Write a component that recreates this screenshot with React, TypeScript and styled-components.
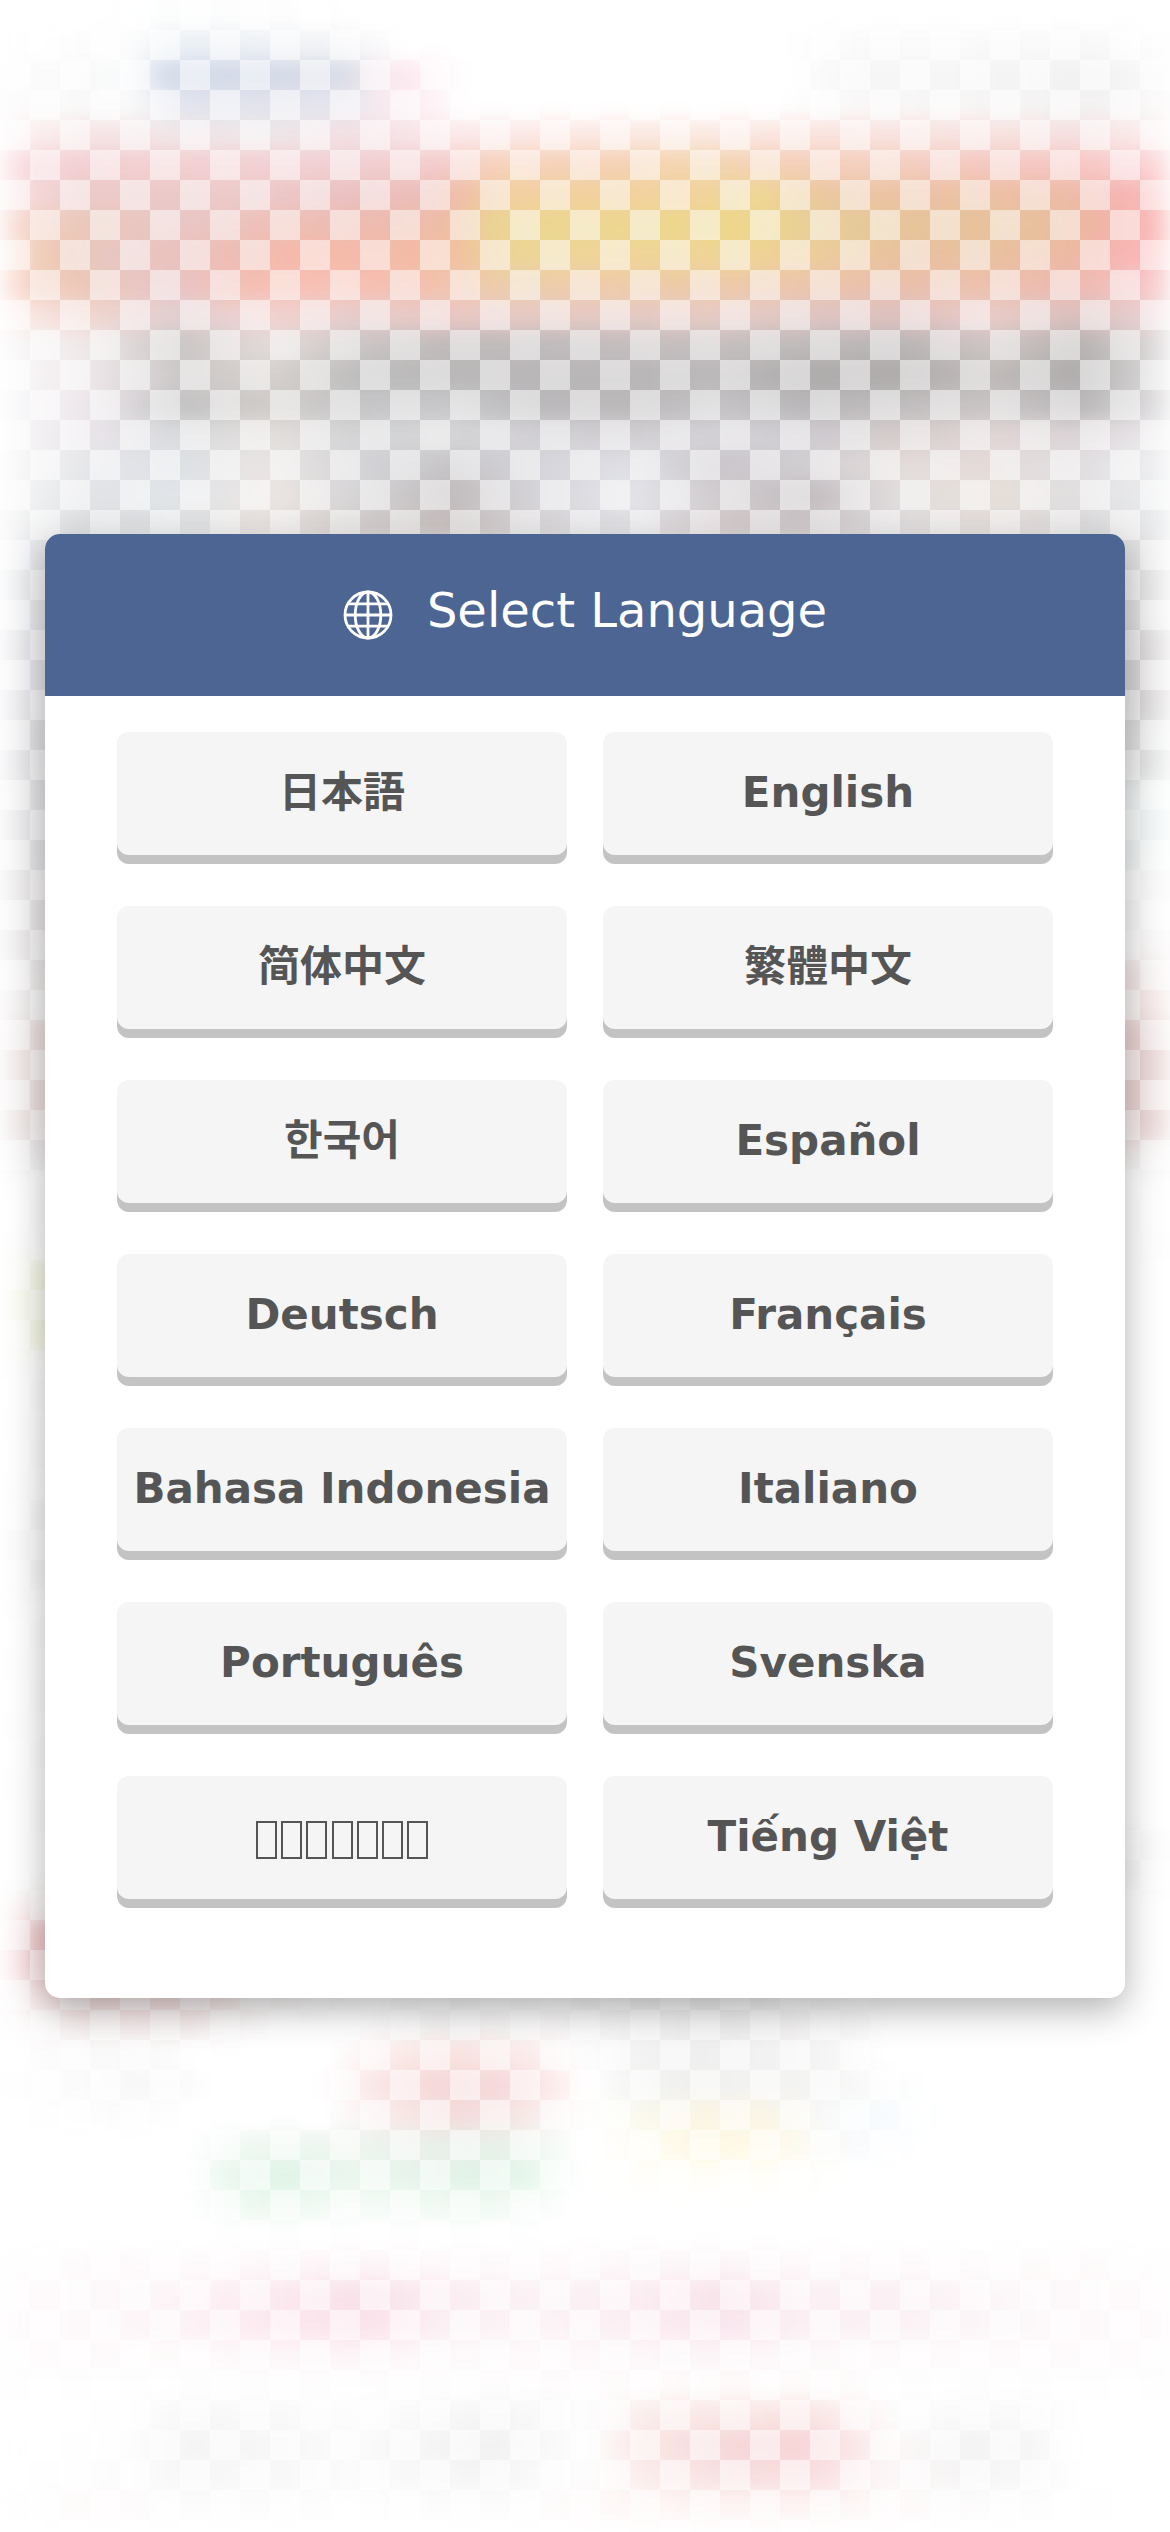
import React from "react";
import styled, { createGlobalStyle } from "styled-components";

const GlobalStyle = createGlobalStyle`
  *, *::before, *::after { box-sizing: border-box; }
  body { margin: 0; background: #fff; }
`;

const Page = styled.div`
  display: grid;
  width: 1170px;
  height: 2532px;
  overflow: hidden;
  background: #fff;
  font-family: "DejaVu Sans", "Noto Sans CJK JP", sans-serif;
`;

const Backdrop = styled.div`
  grid-area: 1 / 1;
  display: grid;
  overflow: hidden;
  height: 2532px;
`;

const Glow = styled.div`
  grid-area: 1 / 1;
  display: flex;
  flex-direction: column;
  filter: blur(10px);
`;

const Band = styled.div<{ $rows: number; $stops: string }>`
  flex: none;
  height: ${(p) => p.$rows * 30}px;
  background: linear-gradient(to right, ${(p) => p.$stops});
`;

const Checker = styled.div`
  grid-area: 1 / 1;
  z-index: 1;
  background:
    linear-gradient(
      to right,
      rgba(255, 255, 255, 0.55),
      rgba(255, 255, 255, 0) 36px calc(100% - 30px),
      rgba(255, 255, 255, 0.3)
    ),
    repeating-conic-gradient(
      transparent 0 25%,
      rgba(255, 255, 255, 0.5) 0 50%
    )
    0 0 / 60px 60px;
`;

const Dialog = styled.section`
  grid-area: 1 / 1;
  z-index: 2;
  place-self: center;
  width: 1080px;
  height: 1464px;
  overflow: hidden;
  border-radius: 15px;
  background: #fff;
  box-shadow: 0 12px 36px rgba(0, 0, 0, 0.3);
`;

const Header = styled.header`
  display: flex;
  align-items: center;
  justify-content: center;
  gap: 34px;
  height: 162px;
  background: #4d6592;
  color: #fff;
`;

const Title = styled.h1`
  margin: 0;
  padding-bottom: 11px;
  font-size: 48px;
  font-weight: 400;
  line-height: 56px;
`;

const GlobeIcon = styled.svg`
  width: 50px;
  height: 50px;
  fill: none;
  stroke: currentColor;
  stroke-width: 2.8;
`;

const LanguageGrid = styled.div`
  display: grid;
  grid-template-columns: repeat(2, 450px);
  grid-auto-rows: 123px;
  gap: 51px 36px;
  padding: 36px 72px;
`;

const LanguageButton = styled.button`
  border: 0;
  padding: 0 0 2px;
  border-radius: 12px;
  background: #f5f5f5;
  box-shadow: 0 9px 0 #c3c3c3;
  color: #555;
  font: bold 42px/49px "DejaVu Sans", "Noto Sans CJK JP", "Noto Sans CJK SC",
    "Noto Sans CJK KR", sans-serif;
  white-space: nowrap;
`;

const GlyphBoxes = styled.span`
  display: flex;
  justify-content: center;
  gap: 4.2px;
  padding-top: 6px;
`;

const GlyphBox = styled.span`
  width: 21px;
  height: 38px;
  border: 2px solid currentColor;
`;

const W = "#fff";

/*
 * Each band: height in 30px rows, then colours from left to right, spaced
 * evenly unless a colour names its own position ("e4ebf2@180").
 */
const bands: [number, string][] = [
  [1, "fff fff fcfdfd fdfdfd fff fff fff fff fff fff fff fff fff fff"],
  [1, "fff fcfcfc@90 fdfdfd@130 eaf0f5@180 eef1f5 f3f4f7@340 fff@410 fff@780 fafafa fafafa f9f9f9 f8f8f8 fff"],
  [1, "fdfdfd f9f9f9@90 fafbfc@130 d3dbea@165 d3d9e7@270 d8dce7@345 f8e8ee@380 fde8ef@410 fff@465 fff@780 f6f6f6 f6f6f6 f4f4f4 f1f1f1 fbfbfb"],
  [1, "fdfbfb f9f9f9@90 fbfbfb@130 e2e5ee@180 e2e3ed@270 e6e6ee@340 f6ebf1@380 fdf0f5@420 fff@470 fff@700 fff@780 faf8f8 f8f6f6 f7f5f5 f3f1f1 fcfafa"],
  [1, "fef5f5 f6e4e4 f1e6e8 eee7e9 f3dfe3 fbe8ea fbe8e5 fbe8e2 fbe8e2 f9e3de f8e3df f6e2df f5e0e0 fdf0f0"],
  [1, "f9d8dd f2cfd2 f3cfd0 f3d0d2 f1cfd2 f3cccc@440 f6d2ba@500 f5d0b5 f3d6ad f4cfb8 f4cfbf f4c8bf f6c5c2 fbd5d9"],
  [1, "fbe2e2 ebcaca ebc9c9 eccacb ebc1c2 ecbdb8@420 f0bea8@460 f2d09f@510 f2d29d@690 eed795@760 ecc79f@820 ecc2a5 ecc0a4 ecbca5@1065 f6b4b2@1125 fbc0c2"],
  [1, "f8d3c8 e9c8b8 e8c6c6 eec0b6 edbbb0 eebda6@450 ebd592@490 ecd78f@630 eed68a@760 e6cf98@810 e6c399 e7c19d@1050 efb4a4@1095 fbb8b8"],
  [1, "fae3d3 ecc6b0@60 e6c7c5@110 efbcb3@240 f6b9aa@290 f3bba5@420 f0c4a0@465 ecd597@510 efd598@630 efd595@740 eccb9d@830 e9c09e e9c1a0 edb9a2@1070 f8b4b2@1120 fcbdbf"],
  [1, "fad5c9 ebc7b6 e7c5c8 f5beb2 f8c1b6 f4bfae ecceab@500 efccaa edcba8 edc6ab eac0ac ecc1ad eeb9b0 f9cbd0"],
  [1, "fdeeea f0d6d0 e2cfd0 f2d2cf e6cdcc ecc8c5 e6cac4 e6cac4 e8ccc5 dfc6c4 dfc1c0 ebccc8 d9c0be f0d6d8"],
  [1, "f9f9f9 efe8e8 c9c4c4 e3dcda cbc5c5 bfbaba bfbbbc c4bdbe c4bfbf bfbaba b9b5b5 cdc5c4 b6b1b0 e2dfdf"],
  [1, "fbfbfb efe7ea cdc8c8 d6d1cd bdbcbc b9b7b7 b9b6b8 b9b6b7 bbb8b9 aeabab aeabaa bfbab8 afacac e2e0e1"],
  [1, "fafafb ede6eb c2c2c3 d0cbc8 c5c5c7 c8c8cb bab8ba bbb8ba c4c2c5 b8b6b8 c0bdbe c9c4c4 b9b7b9 e2e0e2"],
  [1, "fafafb e9e4ea d9dbde e4dfdc d3d4d6 d6d6d8 d2d0d5 d2cfd3 d5d2d8 cfcbd1 d6cccb e0d6d5 dcd4d7 eeedf0"],
  [1, "fafafb e5e6e9 dce0e5 eae5e3 d4d4d8 c6c4c7 d6d5db dfe0e6 c9c5ca d2cfd3 e4dcda e4dbd9 e1dee1 eff0f2"],
  [1, "f8f9f9 e2e3e6 e1e4e8 ece5e2 d5d4d6 c0babb d6d5da e4e5eb d0cbce c2bcbf e2dede e7dfd7 e1dfe1 ebeef0"],
  [1, "f5f5f6 dcdee0 dee1e3 e9e1de d2cccb c8bfbe d8d5d8 e1e0e5 d4cacb cec6c8 dfdcdd e4dcd9 dcdadc e8eaec"],
  [3, "f0f1f3 e3e5e8 eee e6e6e6 e0dedf e9e9e9"],
  [3, "ebebef e0e1e5 eee e6e6e6 d4d1d2 e4e1e1"],
  [2, "e9e9ec dedee2 eee e6e6e6 dddcdc e8eaea"],
  [3, "ebebed e2e1e4 eee fff edf2f2 f3f7f7"],
  [3, "edebec e6e3e4 eee fff f8f6f6 faf9f9"],
  [2, "f2efef ece9e9 eee fff f3e6e4 f4ebea"],
  [4, "f0e7e6 e9dedd fff fff e8d2d0 ead9d8"],
  [1, "f3f1f2 f0eef0 fff fff f5f0f0 f3eeee"],
  [3, "fefefe fdfdfd fff fff fff fdfdfd"],
  [3, "fdfdf8 f4f6e0 fff fff fff fff"],
  [5, "fefefe fcfcfc fff fff fff fff"],
  [3, "fbfbfb f7f7f7 fff fff fff fff"],
  [8, "fefefe fefefe fff fff fff fff"],
  [2, "fff fff fff fff f8f8f8 fbfbfb"],
  [1, "fff9f9 f9eeee fff fff fff fff"],
  [2, "fdf0f1 efc4c7 fff fff fff fff"],
  [1, "fdf5f5 f3dada f5dede fbf6f6 fff f8f8f8 fbfbfb f1f1f1 f0f0f0 fbf9f9 fff fff fff fff"],
  [1, "fff f8eeee f6eded fff fff f6f4f4 faf8f8 f4f4f4 ededed f6f4f4 fff fff fff fff"],
  [1, "fff fbfbfb f9f9f9 fff@200 fff@330 fae9e7@400 f8e2df@460 faebea@530 fff@580 f3f3f3@630 efefef@700 f5f5f5@830 fff@880 fff"],
  [1, "fff f8f8f8@130 f9f9f9@180 fff@210 fff@320 f9e4e4@380 f6d7d8@440 f6d8d9@500 fce8e8@550 fff@590 f7f7f6@620 f0f0ee@680 f4f4f3@820 fdfdfd@900 fff@930 fff"],
  [1, "fff fcfcfc@130 fff@190 fff@330 f8eae8@390 f2dcda@460 f6e6e4@520 fff@580 faf9ee@640 fbf5e4@700 faf5e6@770 f8fafb@830 f7fbfe@890 fff@940 fff"],
  [1, "fff fff@190 eef8f1@250 eef5ef@350 e8eee8@450 e8f2ea@510 fbfefb@570 fff@600 fffbee@660 fef8e2@700 fff9e8@770 f8fbfe@860 fff@920 fff"],
  [1, "fff fff@180 eaf7ef@230 dff4e6@280 ebf6ee@350 e6f4ea@420 e0f2e6@480 e6f6eb@530 fff@580 fffefa@630 fffef6@720 fffefa@790 fff@850 fff"],
  [1, "fff fff@190 eaf8ee@260 f5fbf7@360 eef9f1@470 f4fbf6@520 fff@570 fff"],
  [1, W.slice(1) + " fff"],
  [1, "fff fefafb fefbfb fdf7f9 fdf4f7 fdf9fb fefafb fdf7f9 fcf5f7 fef9fb fefafb fefcfc fefafa fff"],
  [1, "fffbfc fdf9fa fdf4f7 fbeaf0 f8e1e9 fbecf2 fbf2f5 fbeef3 f8e3ea fbf0f4 fbf0f4 fcf6f8 fdf9fa fffbfc"],
  [1, "fffbfc fdf9fa fdf2f6 fce9f0 fbe1eb fbf1f4 fcf4f7 fbeef3 fae6ee fbf0f4 fbf2f5 fcf6f8 fdf9fa fffbfc"],
  [1, "fffcfd fefafb fefbfb fdf6f9 fdf4f7 fdf9fb fef9fb fdf7f9 fcf5f8 fdf9fa fefafb fefafb fefafb fffcfd"],
  [1, "fefefe fefefe fefefe fefefe fefefe fefefe fefcfc fefcfc fefbfa fefcfb fefefe fefefe fefefe fefefe"],
  [1, "fff fefefe@130 f8f8f8@180 f9f9f9@280 fdfdfd@360 f6f6f6@470 f8f8f8@530 fefefe@590 f9ebe9@650 f9e7e5@720 f8e4e2@810 fef6f6@870 fdfdfd@900 f9f9f9@970 fafafa@1030 fff@1080 fff"],
  [1, "fff fdfdfd@130 f5f5f5@180 f7f7f7@280 fbfbfb@350 f1f1f1@490 f8f8f8@540 fefdfd@590 f9e8e6@640 f6d7d8@730 f8d4d7@800 fae4e5@850 fdf8f8@890 f3f3f3@970 f6f6f6@1030 fff@1080 fff"],
  [1, "fff fdfcfc@130 f7f7f7@180 f8f8f8@280 fbfbfb@350 f4f4f4@490 fafafa@540 fefdfd@590 faebe9@650 f7dedf@740 f9dfe1@820 fdf6f6@880 f5f5f5@970 f8f8f8@1030 fff@1080 fff"],
  [1, "fff fefafa fdfcfc fdfcfc fefefe fcfcfc fefcfc fef7f6 fdf4f3 fdf4f3 fefafa fcfcfc fefefe fff"],
];

const toStops = (colors: string) =>
  colors
    .split(" ")
    .map((entry) => {
      const [color, x] = entry.split("@");
      return x ? `#${color} ${x}px` : `#${color}`;
    })
    .join(", ");

/* Bands behind the dialog only show in the margins at either side. */
const sideBand = (colors: string) => {
  const [edge, left, , , right, rightEdge] = colors.split(" ");
  return `#${edge} 0, #${left} 45px, ${W} 120px, ${W} 1050px, #${right} 1125px, #${rightEdge} 1170px`;
};

const languages: { code: string; label?: string; boxes?: number }[] = [
  { code: "ja", label: "日本語" },
  { code: "en", label: "English" },
  { code: "zh-CN", label: "简体中文" },
  { code: "zh-TW", label: "繁體中文" },
  { code: "ko", label: "한국어" },
  { code: "es", label: "Español" },
  { code: "de", label: "Deutsch" },
  { code: "fr", label: "Français" },
  { code: "id", label: "Bahasa Indonesia" },
  { code: "it", label: "Italiano" },
  { code: "pt", label: "Português" },
  { code: "sv", label: "Svenska" },
  { code: "th", boxes: 7 },
  { code: "vi", label: "Tiếng Việt" },
];

function Globe() {
  return (
    <GlobeIcon viewBox="0 0 50 50" aria-hidden="true">
      <circle cx="25" cy="25" r="23" />
      <ellipse cx="25" cy="25" rx="12.8" ry="23" />
      <path d="M25 2v46M2 25h46M5.5 13.8h39M5.5 36.2h39" />
    </GlobeIcon>
  );
}

export default function App() {
  return (
    <Page>
      <GlobalStyle />
      <Backdrop>
        <Glow>
          {bands.map(([rows, colors], i) => (
            <Band
              key={i}
              $rows={rows}
              $stops={
                colors.split(" ").length === 6 && !colors.includes("@")
                  ? sideBand(colors)
                  : toStops(colors)
              }
            />
          ))}
        </Glow>
        <Checker />
      </Backdrop>
      <Dialog>
        <Header>
          <Globe />
          <Title>Select Language</Title>
        </Header>
        <LanguageGrid>
          {languages.map(({ code, label, boxes }) => (
            <LanguageButton key={code} type="button">
              {label ?? (
                <GlyphBoxes>
                  {Array.from({ length: boxes ?? 0 }, (_, i) => (
                    <GlyphBox key={i} />
                  ))}
                </GlyphBoxes>
              )}
            </LanguageButton>
          ))}
        </LanguageGrid>
      </Dialog>
    </Page>
  );
}
